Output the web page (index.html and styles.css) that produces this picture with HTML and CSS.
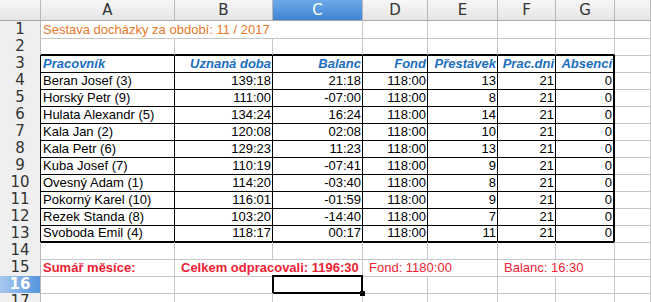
FILE: index.html
```html
<!DOCTYPE html>
<html lang="cs">
<head>
    <meta charset="UTF-8">
    <meta name="viewport" content="width=device-width, initial-scale=1.0">
    <title>Docházka 11/2017</title>
    <link rel="stylesheet" href="styles.css">
</head>
<body>
    <div class="sheet">
        <!-- column headers -->
        <div class="row head">
            <div class="corner"></div>
            <div class="col">A</div>
            <div class="col">B</div>
            <div class="col active">C</div>
            <div class="col">D</div>
            <div class="col">E</div>
            <div class="col">F</div>
            <div class="col">G</div>
            <div class="col"></div>
        </div>

        <div class="row">
            <div class="num">1</div>
            <div class="cell title span3">Sestava docházky za období: 11 / 2017</div>
            <div class="cell"></div>
            <div class="cell"></div>
            <div class="cell"></div>
            <div class="cell"></div>
            <div class="cell"></div>
        </div>

        <div class="row">
            <div class="num">2</div>
            <div class="cell above"></div>
            <div class="cell above"></div>
            <div class="cell above"></div>
            <div class="cell above"></div>
            <div class="cell above"></div>
            <div class="cell above"></div>
            <div class="cell above"></div>
            <div class="cell"></div>
        </div>

        <div class="row">
            <div class="num edge">3</div>
            <div class="cell t th">Pracovník</div>
            <div class="cell t th r">Uznaná doba</div>
            <div class="cell t th r">Balanc</div>
            <div class="cell t th r">Fond</div>
            <div class="cell t th r">Přestávek</div>
            <div class="cell t th r">Prac.dni</div>
            <div class="cell t th r last">Absencí</div>
            <div class="cell"></div>
        </div>

        <div class="row">
            <div class="num edge">4</div>
            <div class="cell t">Beran Josef (3)</div>
            <div class="cell t r">139:18</div>
            <div class="cell t r">21:18</div>
            <div class="cell t r">118:00</div>
            <div class="cell t r">13</div>
            <div class="cell t r">21</div>
            <div class="cell t r last">0</div>
            <div class="cell"></div>
        </div>

        <div class="row">
            <div class="num edge">5</div>
            <div class="cell t">Horský Petr (9)</div>
            <div class="cell t r">111:00</div>
            <div class="cell t r">-07:00</div>
            <div class="cell t r">118:00</div>
            <div class="cell t r">8</div>
            <div class="cell t r">21</div>
            <div class="cell t r last">0</div>
            <div class="cell"></div>
        </div>

        <div class="row">
            <div class="num edge">6</div>
            <div class="cell t">Hulata Alexandr (5)</div>
            <div class="cell t r">134:24</div>
            <div class="cell t r">16:24</div>
            <div class="cell t r">118:00</div>
            <div class="cell t r">14</div>
            <div class="cell t r">21</div>
            <div class="cell t r last">0</div>
            <div class="cell"></div>
        </div>

        <div class="row">
            <div class="num edge">7</div>
            <div class="cell t">Kala Jan (2)</div>
            <div class="cell t r">120:08</div>
            <div class="cell t r">02:08</div>
            <div class="cell t r">118:00</div>
            <div class="cell t r">10</div>
            <div class="cell t r">21</div>
            <div class="cell t r last">0</div>
            <div class="cell"></div>
        </div>

        <div class="row">
            <div class="num edge">8</div>
            <div class="cell t">Kala Petr (6)</div>
            <div class="cell t r">129:23</div>
            <div class="cell t r">11:23</div>
            <div class="cell t r">118:00</div>
            <div class="cell t r">13</div>
            <div class="cell t r">21</div>
            <div class="cell t r last">0</div>
            <div class="cell"></div>
        </div>

        <div class="row">
            <div class="num edge">9</div>
            <div class="cell t">Kuba Josef (7)</div>
            <div class="cell t r">110:19</div>
            <div class="cell t r">-07:41</div>
            <div class="cell t r">118:00</div>
            <div class="cell t r">9</div>
            <div class="cell t r">21</div>
            <div class="cell t r last">0</div>
            <div class="cell"></div>
        </div>

        <div class="row">
            <div class="num edge">10</div>
            <div class="cell t">Ovesný Adam (1)</div>
            <div class="cell t r">114:20</div>
            <div class="cell t r">-03:40</div>
            <div class="cell t r">118:00</div>
            <div class="cell t r">8</div>
            <div class="cell t r">21</div>
            <div class="cell t r last">0</div>
            <div class="cell"></div>
        </div>

        <div class="row">
            <div class="num edge">11</div>
            <div class="cell t">Pokorný Karel (10)</div>
            <div class="cell t r">116:01</div>
            <div class="cell t r">-01:59</div>
            <div class="cell t r">118:00</div>
            <div class="cell t r">9</div>
            <div class="cell t r">21</div>
            <div class="cell t r last">0</div>
            <div class="cell"></div>
        </div>

        <div class="row">
            <div class="num edge">12</div>
            <div class="cell t">Rezek Standa (8)</div>
            <div class="cell t r">103:20</div>
            <div class="cell t r">-14:40</div>
            <div class="cell t r">118:00</div>
            <div class="cell t r">7</div>
            <div class="cell t r">21</div>
            <div class="cell t r last">0</div>
            <div class="cell"></div>
        </div>

        <div class="row">
            <div class="num edge">13</div>
            <div class="cell t bottom">Svoboda Emil (4)</div>
            <div class="cell t bottom r">118:17</div>
            <div class="cell t bottom r">00:17</div>
            <div class="cell t bottom r">118:00</div>
            <div class="cell t bottom r">11</div>
            <div class="cell t bottom r">21</div>
            <div class="cell t bottom r last">0</div>
            <div class="cell"></div>
        </div>

        <div class="row">
            <div class="num">14</div>
            <div class="cell"></div>
            <div class="cell"></div>
            <div class="cell"></div>
            <div class="cell"></div>
            <div class="cell"></div>
            <div class="cell"></div>
            <div class="cell"></div>
            <div class="cell"></div>
        </div>

        <!-- monthly summary -->
        <div class="row">
            <div class="num">15</div>
            <div class="cell sum strong">Sumář měsíce:</div>
            <div class="cell sum strong indent span2">Celkem odpracovali: 1196:30</div>
            <div class="cell sum indent span2">Fond: 1180:00</div>
            <div class="cell sum indent span2">Balanc: 16:30</div>
            <div class="cell"></div>
        </div>

        <div class="row">
            <div class="num active">16</div>
            <div class="cell"></div>
            <div class="cell"></div>
            <div class="cell cursor"></div>
            <div class="cell"></div>
            <div class="cell"></div>
            <div class="cell"></div>
            <div class="cell"></div>
            <div class="cell"></div>
        </div>

        <div class="row">
            <div class="num">17</div>
            <div class="cell"></div>
            <div class="cell"></div>
            <div class="cell"></div>
            <div class="cell"></div>
            <div class="cell"></div>
            <div class="cell"></div>
            <div class="cell"></div>
            <div class="cell"></div>
        </div>
    </div>
</body>
</html>
```

FILE: styles.css
```css
* {
    margin: 0;
    padding: 0;
    box-sizing: border-box;
}
body {
    font-family: "Liberation Sans", Arial, sans-serif;
    font-size: 13px;
    color: #000;
    background: #fff;
    overflow: hidden;
}
.sheet {
    width: 651px;
}
.row {
    display: grid;
    grid-template-columns: 41px 134px 98px 90px 65px 70px 58px 59px 1fr;
    height: 17px;
}
.row.head {
    height: 21px;
}

/* headers */
.corner,
.col {
    background: linear-gradient(#f7f7f7, #e5e5e5);
    border-right: 1px solid #b8b8b8;
    border-bottom: 1px solid #a8a8a8;
}
.col {
    display: flex;
    align-items: center;
    justify-content: center;
    font-family: "DejaVu Sans", sans-serif;
    font-size: 15px;
    color: #333;
}
.col.active {
    background: linear-gradient(#6ea9e8, #3e85d4);
    color: #fff;
}
.num {
    display: flex;
    align-items: center;
    justify-content: center;
    font-family: "DejaVu Sans", sans-serif;
    font-size: 15px;
    line-height: 17px;
    color: #333;
    background: #efefef;
    border-right: 1px solid #b8b8b8;
    border-bottom: 1px solid #c4c4c4;
}
.num.edge {
    border-right-color: #000;
}
.num.active {
    background: linear-gradient(to right, #a9c9ef, #5595de);
    color: #fff;
    font-weight: bold;
}

/* cells */
.cell {
    display: flex;
    align-items: flex-end;
    padding: 0 1px 1px 2px;
    white-space: nowrap;
    border-right: 1px solid #c6c6c6;
    border-bottom: 1px solid #c6c6c6;
    position: relative;
}
.cell.r {
    justify-content: flex-end;
}
.span2 {
    grid-column: span 2;
}
.span3 {
    grid-column: span 3;
}
.title {
    color: #e8782a;
}
.above {
    border-bottom: 2px solid #000;
}
.t {
    border-right-color: #000;
    border-bottom-color: #000;
}
.t.last {
    border-right-width: 2px;
}
.t.bottom {
    border-bottom-width: 2px;
}
.th {
    color: #1c6ebf;
    font-weight: bold;
    font-style: italic;
}
.sum {
    color: #ee2233;
}
.sum.strong {
    font-weight: bold;
}
.sum.indent {
    padding-left: 6px;
}

/* selected cell with fill handle */
.cursor::after {
    content: "";
    position: absolute;
    left: -1px;
    top: -1px;
    right: -1px;
    bottom: -1px;
    border: 2px solid #000;
}
.cursor::before {
    content: "";
    position: absolute;
    right: -3px;
    bottom: -3px;
    width: 5px;
    height: 5px;
    background: #000;
    z-index: 1;
}
```
